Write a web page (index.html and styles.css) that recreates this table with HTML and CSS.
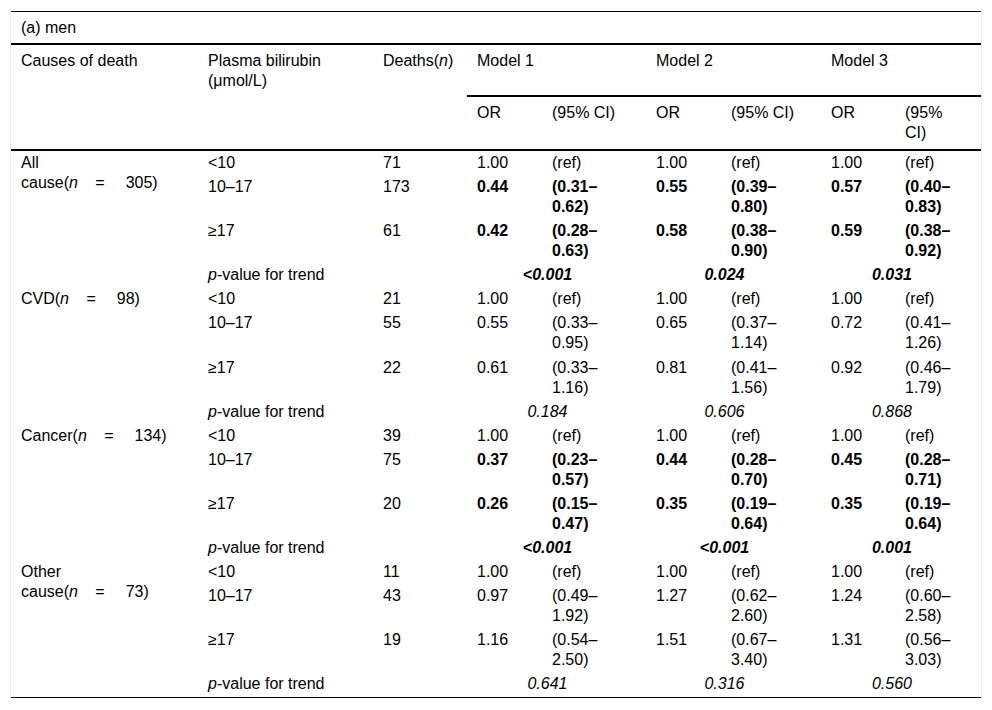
FILE: index.html
```html
<!DOCTYPE html>
<html lang="en">
<head>
<meta charset="utf-8">
<title>Table (a) men</title>
<link rel="stylesheet" href="styles.css">
</head>
<body>
<div class="frame">
<table class="data">
  <colgroup>
    <col class="c-cause"><col class="c-bili"><col class="c-deaths">
    <col class="c-or1"><col class="c-ci1"><col class="c-or2"><col class="c-ci2"><col class="c-or3"><col class="c-ci3">
  </colgroup>
  <thead>
    <tr class="h-title"><th colspan="9">(a) men</th></tr>
    <tr class="h-top">
      <th>Causes of death</th>
      <th>Plasma bilirubin (μmol/L)</th>
      <th>Deaths(<i>n</i>)</th>
      <th colspan="2" class="model">Model 1</th>
      <th colspan="2" class="model">Model 2</th>
      <th colspan="2" class="model">Model 3</th>
    </tr>
    <tr class="h-sub">
      <th></th><th></th><th></th>
      <th>OR</th><th class="ci">(95% CI)</th>
      <th>OR</th><th class="ci">(95% CI)</th>
      <th>OR</th><th class="ci">(95% CI)</th>
    </tr>
  </thead>
  <tbody>
    <tr>
      <td rowspan="4">All<br>cause(<i>n</i><span class="eq">=</span>305)</td>
      <td>&lt;10</td><td>71</td>
      <td class="or">1.00</td><td class="ci">(ref)</td><td class="or">1.00</td><td class="ci">(ref)</td><td class="or">1.00</td><td class="ci">(ref)</td>
    </tr>
    <tr class="sig">
      <td>10–17</td><td>173</td>
      <td class="or">0.44</td><td class="ci">(0.31–0.62)</td><td class="or">0.55</td><td class="ci">(0.39–0.80)</td><td class="or">0.57</td><td class="ci">(0.40–0.83)</td>
    </tr>
    <tr class="sig">
      <td>≥17</td><td>61</td>
      <td class="or">0.42</td><td class="ci">(0.28–0.63)</td><td class="or">0.58</td><td class="ci">(0.38–0.90)</td><td class="or">0.59</td><td class="ci">(0.38–0.92)</td>
    </tr>
    <tr class="sig">
      <td colspan="2"><i>p</i>-value for trend</td>
      <td colspan="2" class="pv">&lt;0.001</td><td colspan="2" class="pv">0.024</td><td colspan="2" class="pv">0.031</td>
    </tr>

    <tr>
      <td rowspan="4">CVD(<i>n</i><span class="eq">=</span>98)</td>
      <td>&lt;10</td><td>21</td>
      <td class="or">1.00</td><td class="ci">(ref)</td><td class="or">1.00</td><td class="ci">(ref)</td><td class="or">1.00</td><td class="ci">(ref)</td>
    </tr>
    <tr>
      <td>10–17</td><td>55</td>
      <td class="or">0.55</td><td class="ci">(0.33–0.95)</td><td class="or">0.65</td><td class="ci">(0.37–1.14)</td><td class="or">0.72</td><td class="ci">(0.41–1.26)</td>
    </tr>
    <tr>
      <td>≥17</td><td>22</td>
      <td class="or">0.61</td><td class="ci">(0.33–1.16)</td><td class="or">0.81</td><td class="ci">(0.41–1.56)</td><td class="or">0.92</td><td class="ci">(0.46–1.79)</td>
    </tr>
    <tr>
      <td colspan="2"><i>p</i>-value for trend</td>
      <td colspan="2" class="pv">0.184</td><td colspan="2" class="pv">0.606</td><td colspan="2" class="pv">0.868</td>
    </tr>

    <tr>
      <td rowspan="4">Cancer(<i>n</i><span class="eq">=</span>134)</td>
      <td>&lt;10</td><td>39</td>
      <td class="or">1.00</td><td class="ci">(ref)</td><td class="or">1.00</td><td class="ci">(ref)</td><td class="or">1.00</td><td class="ci">(ref)</td>
    </tr>
    <tr class="sig">
      <td>10–17</td><td>75</td>
      <td class="or">0.37</td><td class="ci">(0.23–0.57)</td><td class="or">0.44</td><td class="ci">(0.28–0.70)</td><td class="or">0.45</td><td class="ci">(0.28–0.71)</td>
    </tr>
    <tr class="sig">
      <td>≥17</td><td>20</td>
      <td class="or">0.26</td><td class="ci">(0.15–0.47)</td><td class="or">0.35</td><td class="ci">(0.19–0.64)</td><td class="or">0.35</td><td class="ci">(0.19–0.64)</td>
    </tr>
    <tr class="sig">
      <td colspan="2"><i>p</i>-value for trend</td>
      <td colspan="2" class="pv">&lt;0.001</td><td colspan="2" class="pv">&lt;0.001</td><td colspan="2" class="pv">0.001</td>
    </tr>

    <tr>
      <td rowspan="4">Other<br>cause(<i>n</i><span class="eq">=</span>73)</td>
      <td>&lt;10</td><td>11</td>
      <td class="or">1.00</td><td class="ci">(ref)</td><td class="or">1.00</td><td class="ci">(ref)</td><td class="or">1.00</td><td class="ci">(ref)</td>
    </tr>
    <tr>
      <td>10–17</td><td>43</td>
      <td class="or">0.97</td><td class="ci">(0.49–1.92)</td><td class="or">1.27</td><td class="ci">(0.62–2.60)</td><td class="or">1.24</td><td class="ci">(0.60–2.58)</td>
    </tr>
    <tr>
      <td>≥17</td><td>19</td>
      <td class="or">1.16</td><td class="ci">(0.54–2.50)</td><td class="or">1.51</td><td class="ci">(0.67–3.40)</td><td class="or">1.31</td><td class="ci">(0.56–3.03)</td>
    </tr>
    <tr>
      <td colspan="2"><i>p</i>-value for trend</td>
      <td colspan="2" class="pv">0.641</td><td colspan="2" class="pv">0.316</td><td colspan="2" class="pv">0.560</td>
    </tr>
  </tbody>
</table>
</div>
</body>
</html>
```
FILE: styles.css
```css
html, body {
  margin: 0;
  padding: 0;
  background: #ffffff;
}

body {
  font-family: "Liberation Sans", Arial, sans-serif;
  font-size: 16px;
  color: #000000;
}

.frame {
  margin: 11px 0 0 10px;
  width: 970px;
  border-left: 1px solid #ebebeb;
  border-right: 1px solid #ebebeb;
}

.data {
  width: 970px;
  table-layout: fixed;
  border-collapse: separate;
  border-spacing: 0;
  line-height: 20px;
  border-top: 1px solid #000;
  border-bottom: 1px solid #000;
}

.c-cause { width: 187px; }
.c-bili { width: 175px; }
.c-deaths { width: 94px; }
.c-or1 { width: 75px; }
.c-ci1 { width: 104px; }
.c-or2 { width: 75px; }
.c-ci2 { width: 100px; }
.c-or3 { width: 74px; }
.c-ci3 { width: 86px; }

.data th,
.data td {
  text-align: left;
  vertical-align: top;
  font-weight: normal;
  padding: 2px 8px 2.1px 10px;
}

.data th {
  padding-top: 6px;
  padding-bottom: 5px;
}

.data .ci {
  padding-right: 16px;
}

.h-title th {
  border-bottom: 2px solid #000;
}

.h-top th {
  padding-bottom: 6px;
}

.h-top th.model {
  border-bottom: 2px solid #000;
}

.h-sub th {
  padding-bottom: 6px;
  border-bottom: 2px solid #000;
}

.sig td.or,
.sig td.ci,
.sig td.pv {
  font-weight: bold;
}

.data td.pv {
  font-style: italic;
  text-align: center;
  padding-left: 10px;
  padding-right: 28px;
}

.eq {
  margin: 0 21px 0 17.4px;
}
```
